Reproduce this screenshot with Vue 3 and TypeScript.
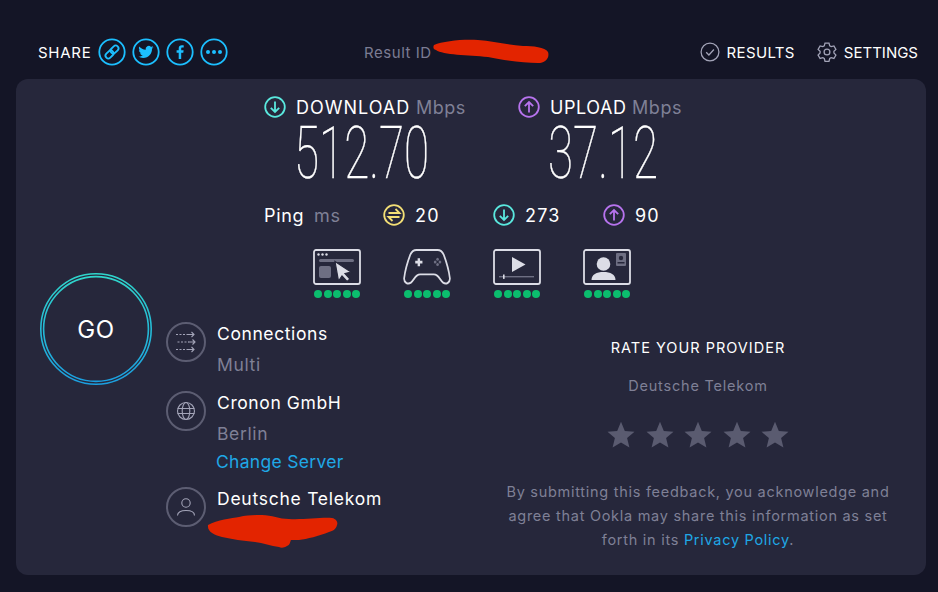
<script setup lang="ts">
const dots = [0, 1, 2, 3, 4];
const stars = [0, 1, 2, 3, 4];
</script>

<template>
  <div class="page">
    <header class="top">
      <div class="share">
        <span class="share-label">SHARE</span>
        <svg class="share-ic" viewBox="0 0 28 28"><circle cx="14" cy="14" r="12.7" /><g transform="rotate(45 14 14)"><rect x="11.2" y="6" width="5.6" height="9" rx="2.8" /><rect x="11.2" y="13" width="5.6" height="9" rx="2.8" /></g></svg>
        <svg class="share-ic" viewBox="0 0 28 28"><circle cx="14" cy="14" r="12.7" /><path class="fill" d="M21.5 9.3c-.6.3-1.2.4-1.8.5.6-.4 1.1-1 1.3-1.7-.6.4-1.3.6-2 .8a3.1 3.1 0 0 0-5.3 2.8c-2.6-.1-4.9-1.4-6.4-3.3-.8 1.4-.4 3.2 1 4.1-.5 0-1-.2-1.4-.4 0 1.5 1.1 2.8 2.5 3.1-.5.1-.9.1-1.4 0 .4 1.2 1.5 2.1 2.9 2.1-1.3 1-3 1.5-4.6 1.3 1.4.9 3.1 1.4 4.8 1.4 5.8 0 9.1-4.9 8.9-9.3.6-.4 1.1-.9 1.5-1.4z" /></svg>
        <svg class="share-ic" viewBox="0 0 28 28"><circle cx="14" cy="14" r="12.7" /><path class="fill" d="M15.2 21v-6.3h2.1l.3-2.4h-2.4v-1.5c0-.7.2-1.2 1.2-1.2h1.3V7.4c-.2 0-1-.1-1.9-.1-1.900 0-3.100 1.100-3.100 3.200v1.800h-2.100v2.400h2.100V21z" /></svg>
        <svg class="share-ic" viewBox="0 0 28 28"><circle cx="14" cy="14" r="12.7" /><circle class="fill" cx="8" cy="14" r="2" /><circle class="fill" cx="14" cy="14" r="2" /><circle class="fill" cx="20" cy="14" r="2" /></svg>
      </div>
      <div class="result-id">Result ID</div>
      <nav class="nav">
        <span class="nav-item">
          <svg class="nav-ic" viewBox="0 0 22 22"><circle cx="11" cy="11" r="9.8" /><path d="M6.8 11.3l3 3 5.5-6" /></svg>RESULTS
        </span>
        <span class="nav-item settings">
          <svg class="nav-ic" viewBox="0 0 22 22"><path d="M8.8 1.2h4.4l.8 3 1.6.9 3-.8 2.2 3.800-2.200 2.200v1.800l2.200 2.200-2.200 3.800-3-.8-1.600.9-.8 3H8.800l-.8-3-1.600-.9-3 .8L1.200 14.300l2.200-2.200v-1.800L1.200 8.100l2.200-3.800 3 .8 1.600-.9z" /><circle cx="11" cy="11" r="3.2" /></svg>SETTINGS
        </span>
      </nav>
    </header>

    <main class="card">
      <div class="go-col">
        <div class="go">
          <svg class="go-rings" viewBox="0 0 112 112">
            <defs>
              <linearGradient id="goGrad" x1="0" y1="0" x2="0" y2="1">
                <stop offset="0" stop-color="#2fd6cb" />
                <stop offset="1" stop-color="#1b9fe0" />
              </linearGradient>
            </defs>
            <circle cx="56" cy="56" r="55.2" />
            <circle cx="56" cy="56" r="52.4" />
          </svg>
          <span class="go-text">GO</span>
        </div>
      </div>

      <section class="stats">
        <div class="speeds">
          <div class="speed">
            <div class="speed-head">
              <svg class="dir dl" viewBox="0 0 22 22"><circle cx="11" cy="11" r="9.8" /><path d="M11 5.5v10.5M6.8 11.8l4.2 4.2 4.2-4.2" /></svg>
              <span><span class="wide">DOWNLOAD</span> <em>Mbps</em></span>
            </div>
            <div class="speed-value"><span>512.70</span></div>
          </div>
          <div class="speed">
            <div class="speed-head">
              <svg class="dir ul" viewBox="0 0 22 22"><circle cx="11" cy="11" r="9.8" /><path d="M11 16.5V6M6.8 10.2L11 6l4.2 4.2" /></svg>
              <span>UPLOAD <em>Mbps</em></span>
            </div>
            <div class="speed-value"><span>37.12</span></div>
          </div>
        </div>

        <div class="ping">
          <span class="ping-label">Ping <em>ms</em></span>
          <span class="ping-item">
            <svg class="dir pg" viewBox="0 0 22 22"><circle cx="11" cy="11" r="9.8" /><path d="M5.5 9h11L12.500 5M16.500 13h-11l4 4" /></svg>20
          </span>
          <span class="ping-item">
            <svg class="dir dl" viewBox="0 0 22 22"><circle cx="11" cy="11" r="9.8" /><path d="M11 5.5v10.5M6.8 11.8l4.2 4.2 4.2-4.2" /></svg>273
          </span>
          <span class="ping-item">
            <svg class="dir ul" viewBox="0 0 22 22"><circle cx="11" cy="11" r="9.8" /><path d="M11 16.5V6M6.8 10.2L11 6l4.2 4.2" /></svg>90
          </span>
        </div>

        <div class="quality">
          <div class="q">
            <svg class="q-ic" viewBox="0 0 48 36">
              <rect class="ln" x="1" y="1" width="46" height="34" rx="2" />
              <circle class="sl" cx="5.5" cy="5.5" r="1.2" /><circle class="sl" cx="9.5" cy="5.5" r="1.2" /><circle class="sl" cx="13.5" cy="5.5" r="1.2" />
              <rect class="dim" x="6" y="10" width="35" height="3" rx="1.5" />
              <rect class="dim" x="6" y="17" width="12" height="12" rx="2" />
              <path class="sl" d="M22 12.500L38 23l-6 1.500 5 5.500-3 2.500-5-5.500-3.500 5z" stroke="#26273b" stroke-width="1.200" />
            </svg>
            <div class="dots"><i v-for="d in dots" :key="d" /></div>
          </div>
          <div class="q">
            <svg class="q-ic" viewBox="0 1 50 33.5" preserveAspectRatio="none">
              <path class="ln" d="M14 2h22c3 0 5 1.500 6.500 4.500 2.500 6 5.500 16 6.300 21.500.5 4-3.800 6.500-7 4.300-2.300-1.700-3.800-5-6.200-6.500-1-.7-2.200-1.200-3.600-1.200H18c-1.400 0-2.600.5-3.600 1.200-2.400 1.500-3.900 4.800-6.200 6.500-3.200 2.200-7.500-.3-7-4.300.8-5.500 3.800-15.500 6.300-21.500C9 3.500 11 2 14 2z" />
              <path class="plus" d="M16.500 9.500v7.500M12.750 13.250h7.500" />
              <circle class="dim" cx="36" cy="10.500" r="1.400" /><circle class="dim" cx="36" cy="15.500" r="1.400" /><circle class="dim" cx="33.500" cy="13" r="1.400" /><circle class="dim" cx="38.500" cy="13" r="1.400" />
            </svg>
            <div class="dots"><i v-for="d in dots" :key="d" /></div>
          </div>
          <div class="q">
            <svg class="q-ic" viewBox="0 0 48 36">
              <rect class="ln" x="1" y="1" width="46" height="34" rx="2" />
              <path class="sl" d="M19 8l13.500 7.500L19 23z" />
              <rect class="dim" x="6" y="27" width="35" height="1.400" />
              <rect class="sl" x="10" y="25.500" width="1.600" height="4.400" />
            </svg>
            <div class="dots"><i v-for="d in dots" :key="d" /></div>
          </div>
          <div class="q">
            <svg class="q-ic" viewBox="0 0 48 36">
              <rect class="ln" x="1" y="1" width="46" height="34" rx="2" />
              <circle class="sl" cx="20.500" cy="15" r="6.800" />
              <path class="sl" d="M8.500 31c0-5.500 5-8 12-8s12 2.500 12 8z" />
              <rect class="dim" x="33" y="4" width="10" height="13" rx="1" />
              <circle cx="38" cy="9" r="2.200" fill="#26273b" />
              <rect x="34.500" y="13" width="7" height="1.500" fill="#26273b" />
            </svg>
            <div class="dots"><i v-for="d in dots" :key="d" /></div>
          </div>
        </div>
      </section>

      <section class="lower">
        <div class="details">
          <div class="detail first">
            <span class="ring">
              <svg viewBox="0 0 22 22" width="22" height="22">
                <path d="M1 3.500h11M2.500 11h11M1 18.500h11" stroke-dasharray="2 1.500" />
                <path d="M12 3.500h7M16.500 1l2.500 2.500L16.500 6M13 11h7M17.500 8.500l2.500 2.500-2.500 2.500M12 18.500h7M16.500 16l2.500 2.500-2.500 2.500" />
              </svg>
            </span>
            <div class="detail-text">
              <div class="name">Connections</div>
              <div class="sub">Multi</div>
            </div>
          </div>
          <div class="detail">
            <span class="ring">
              <svg viewBox="0 0 22 22" width="22" height="22">
                <circle cx="11" cy="11" r="8.500" />
                <ellipse cx="11" cy="11" rx="3.800" ry="8.500" />
                <path d="M2.500 8.500h17M2.500 13.500h17" />
              </svg>
            </span>
            <div class="detail-text">
              <div class="name">Cronon GmbH</div>
              <div class="sub">Berlin</div>
              <a class="link change">Change Server</a>
            </div>
          </div>
          <div class="detail">
            <span class="ring">
              <svg viewBox="0 0 22 22" width="22" height="22">
                <circle cx="11" cy="7" r="4.200" />
                <path d="M2.500 19.500c0-3.500 3.500-5 8.500-5s8.500 1.500 8.500 5" />
              </svg>
            </span>
            <div class="detail-text">
              <div class="name telekom">Deutsche Telekom</div>
            </div>
          </div>
        </div>

        <div class="rate">
          <div class="rate-title">RATE YOUR PROVIDER</div>
          <div class="rate-provider">Deutsche Telekom</div>
          <div class="stars">
            <svg v-for="s in stars" :key="s" viewBox="0 0 28 28" width="28" height="28">
              <path d="M14 .8l3.800 9.100 9.700.8-7.400 6.400 2.300 9.500L14 21.500l-8.400 5.100 2.300-9.500L.5 10.700l9.700-.8z" />
            </svg>
          </div>
          <p class="rate-note">By submitting this feedback, you acknowledge and agree that Ookla may share this information as set forth in its <a class="link">Privacy Policy</a>.</p>
        </div>
      </section>
    </main>

    <svg class="scribble s1" viewBox="0 0 117 25" width="117" height="25"><path d="M1 6C10 2 30 0 45 1 60 2 75 6 90 7 100 7 112 8 115 13 117 19 112 24 105 24 90 24 70 21 55 18 35 16 10 16 3 11 0 10 0 8 1 6z" /></svg>
    <svg class="scribble s2" viewBox="0 0 131 33" width="131" height="33"><path d="M1 10C10 5 25 3 32 2 40 0 50 0 55 0 65 0 72 4 82 4 95 5 115 2 125 3 130 4 131 8 130 10 129 14 126 16 122 17 112 21 100 24 92 25L84 25C83 27 83 30 80 31 77 33 74 33 72 32 64 31 56 28 48 27 36 26 25 24 15 22 8 20 0 17 1 10z" /></svg>
  </div>
</template>

<style>
html, body { margin: 0; background: #141526; }
</style>

<style scoped>
.page {
  position: relative;
  width: 938px;
  height: 592px;
  overflow: hidden;
  box-sizing: border-box;
  padding: 0 12px 17px 16px;
  display: flex;
  flex-direction: column;
  background: #141526;
  font-family: Inter, "Noto Sans", sans-serif;
  color: #fff;
}
.top {
  height: 79px;
  flex: none;
  display: flex;
  align-items: center;
  box-sizing: border-box;
  padding: 25px 8px 0 22px;
  font-size: 15px;
}
.share { display: flex; align-items: center; width: 326px; }
.share-label { margin-right: 6px; letter-spacing: .75px; }
.share-ic { width: 28px; height: 28px; margin-right: 6px; fill: none; stroke: #1cbfff; stroke-width: 1.8; }
.share-ic .fill { fill: #1cbfff; stroke: none; }
.result-id { color: #7b7c93; letter-spacing: .55px; }
.nav { margin-left: auto; display: flex; gap: 22px; }
.nav-item { display: flex; align-items: center; gap: 7px; letter-spacing: .35px; }
.settings { letter-spacing: 0; }
.nav-ic { width: 20px; height: 20px; fill: none; stroke: #a3a4b8; stroke-width: 1.4; }
.card {
  flex: 1;
  background: #26273b;
  border-radius: 12px;
  display: grid;
  grid-template-columns: 150px 1fr;
  grid-template-rows: 242px 1fr;
}
.go-col { grid-row: 1 / 3; padding: 194px 0 0 24px; }
.go { width: 112px; height: 112px; display: grid; place-items: center; }
.go > * { grid-area: 1 / 1; }
.go-rings { width: 112px; height: 112px; fill: none; stroke: url(#goGrad); stroke-width: 1.6; }
.go-text { font-size: 24px; letter-spacing: .5px; }
.stats { padding-top: 15px; }
.speeds { display: flex; margin-left: 98px; }
.speed { display: flex; flex-direction: column; width: 254px; }
.speed-head {
  display: flex;
  align-items: center;
  gap: 10px;
  font-size: 18px;
  letter-spacing: .55px;
  height: 26px;
  white-space: nowrap;
}
.wide { letter-spacing: 1px; }
em { font-style: normal; color: #7f8096; }
.dir { width: 22px; height: 22px; flex: none; fill: none; stroke-width: 1.8; }
.dl { stroke: #5ae8de; }
.ul { stroke: #b773ee; }
.pg { stroke: #f3df76; }
.speed-value { height: 62px; padding: 3px 0 0 30px; }
.speed-value span {
  display: block;
  width: 200px;
  font-family: Roboto, sans-serif;
  font-weight: 100;
  font-size: 72px;
  line-height: 62px;
  transform: scaleX(.636);
  transform-origin: left center;
  white-space: nowrap;
  -webkit-text-stroke: .4px #fff;
}
.ping {
  display: flex;
  align-items: center;
  margin-top: 17px;
  margin-left: 98px;
  height: 26px;
  font-size: 18px;
  letter-spacing: .7px;
}
.ping-label { width: 119px; }
.ping-label em { margin-left: 4px; }
.ping-item { display: flex; align-items: center; gap: 10px; width: 110px; letter-spacing: 1.2px; }
.quality { display: flex; margin-top: 21px; margin-left: 147px; gap: 42px; }
.q { width: 48px; display: flex; flex-direction: column; align-items: center; }
.q-ic { width: 48px; height: 36px; overflow: visible; }
.ln { fill: none; stroke: #dcdde6; stroke-width: 1.8; }
.sl { fill: #dcdde6; }
.dim { fill: #6e6f83; }
.plus { fill: none; stroke: #dcdde6; stroke-width: 2.5; }
.dots { display: flex; gap: 1.5px; margin-top: 5px; }
.dots i { width: 8px; height: 8px; border-radius: 50%; background: #0bbd6e; }
.lower { display: flex; align-items: flex-start; }
.details { width: 312px; flex: none; }
.detail { display: flex; gap: 11px; }
.ring {
  width: 40px;
  height: 40px;
  margin-top: 1px;
  flex: none;
  box-sizing: border-box;
  border: 2px solid #5c5d72;
  border-radius: 50%;
  display: flex;
  align-items: center;
  justify-content: center;
}
.ring svg { fill: none; stroke: #a3a4b8; stroke-width: 1.1; }
.name { font-size: 17.5px; line-height: 26px; letter-spacing: .6px; white-space: nowrap; }
.telekom { letter-spacing: .75px; }
.sub { font-size: 17.5px; line-height: 26px; margin-top: 5px; color: #7f8096; letter-spacing: .65px; }
.detail-text { padding-bottom: 11px; }
.first .detail-text { padding-bottom: 12px; }
.link { color: #1fa8e6; }
.change { font-size: 17.5px; line-height: 26px; margin-top: 2px; margin-left: -1px; display: block; letter-spacing: .3px; }
.rate { width: 400px; margin-left: 20px; text-align: center; padding-top: 17px; }
.rate-title { font-size: 14.5px; line-height: 20px; letter-spacing: 1px; white-space: nowrap; }
.rate-provider { font-size: 14.5px; line-height: 20px; margin-top: 18px; color: #7f8096; letter-spacing: .8px; }
.stars { display: flex; justify-content: center; gap: 10.5px; margin-top: 25px; fill: #5a5b70; }
.rate-note {
  margin: 31px 0 0;
  font-size: 14.5px;
  line-height: 24px;
  color: #7f8096;
  letter-spacing: .72px;
}
.scribble { position: absolute; fill: #e32400; }
.s1 { left: 433px; top: 39px; }
.s2 { left: 207px; top: 515px; }
</style>
